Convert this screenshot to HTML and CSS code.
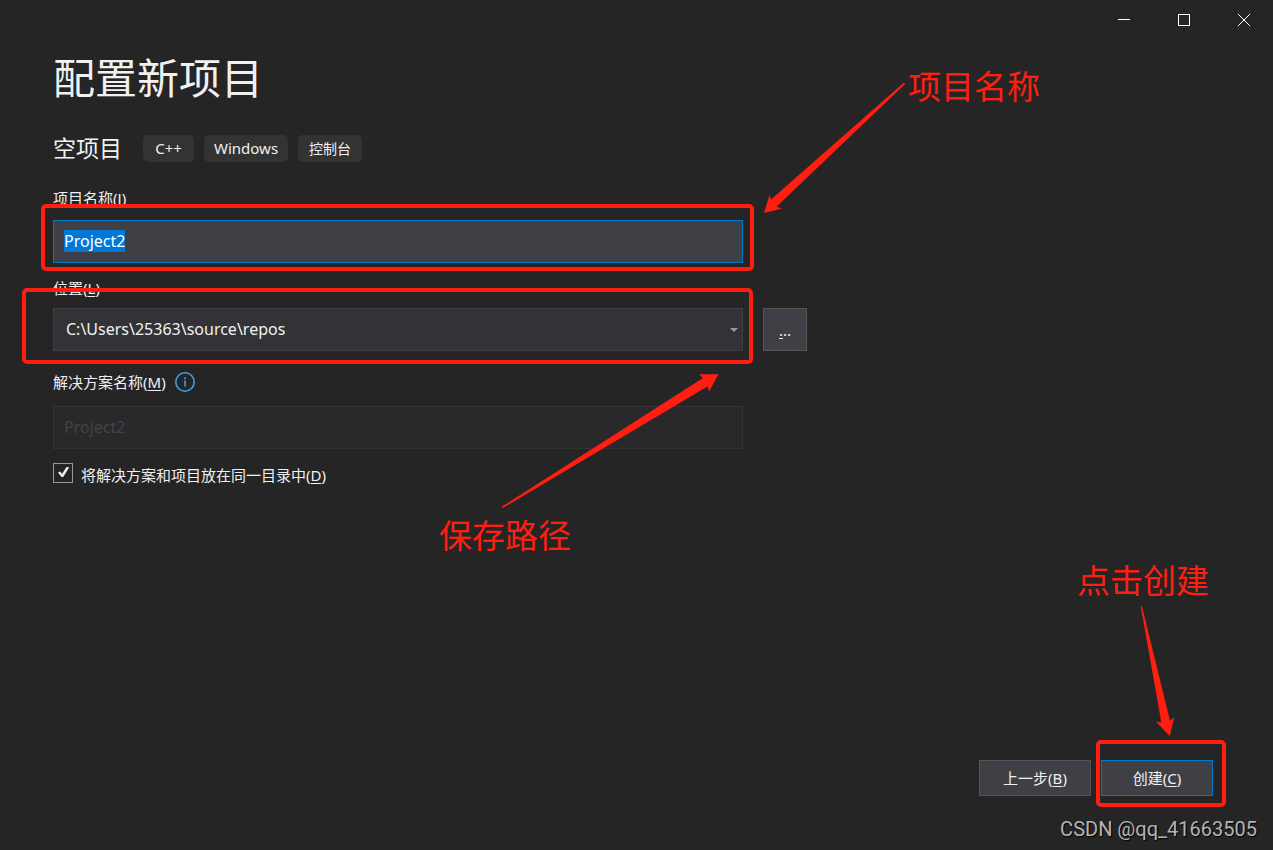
FILE: index.html
```html
<!DOCTYPE html>
<html lang="zh-CN">
<head>
<meta charset="utf-8">
<title>配置新项目</title>
<link rel="stylesheet" href="styles.css">
</head>
<body>
<div class="window">
  <header class="titlebar">
    <button class="winbtn" type="button" aria-label="最小化"><svg width="14" height="14" viewBox="0 0 14 14"><path d="M1 6.500h12"/></svg></button>
    <button class="winbtn" type="button" aria-label="最大化"><svg width="14" height="14" viewBox="0 0 14 14"><path d="M1.500 1.500h11v11h-11z"/></svg></button>
    <button class="winbtn" type="button" aria-label="关闭"><svg width="14" height="14" viewBox="0 0 14 14"><path d="M1 1l12 12M13 1L1 13"/></svg></button>
  </header>
  <main class="content">
    <h1 class="title">配置新项目</h1>
    <div class="template">
      <h2 class="template-name">空项目</h2>
      <ul class="tags"><li class="tag">C++</li><li class="tag">Windows</li><li class="tag tag-cjk">控制台</li></ul>
    </div>
    <form class="form" id="config">
      <div class="group">
        <label class="label" for="name">项目名称(<u>J</u>)</label>
        <div class="field"><input class="box box-active" id="name" type="text" value="Project2" spellcheck="false" autocomplete="off"><span class="frame frame-name"></span></div>
      </div>
      <div class="group group-location">
        <label class="label" for="location">位置(<u>L</u>)</label>
        <div class="field">
          <select class="box box-select" id="location"><option>C:\Users\25363\source\repos</option></select>
          <svg class="caret" width="8" height="4" viewBox="0 0 8 4"><path d="M0 0h8L4 4z"/></svg>
          <span class="frame frame-location"></span>
        </div>
        <button class="browse" type="button" aria-label="浏览"><u>.</u>..</button>
      </div>
      <div class="group group-solution">
        <div class="label-row">
          <label class="label" for="solution">解决方案名称(<u>M</u>)</label>
          <svg class="info" width="20" height="20" viewBox="0 0 20 20"><circle cx="10" cy="10" r="9.200"/><path d="M10 8.500v6M10 5.300v2"/></svg>
        </div>
        <div class="field"><input class="box" id="solution" type="text" value="Project2" disabled></div>
      </div>
      <div class="check-row">
        <input class="check" id="same-dir" type="checkbox" checked>
        <svg class="tick" width="20" height="20" viewBox="0 0 20 20"><path d="M5 9.500l2.300-1 1.700 2.500L13.500 4l2.700.2L10.200 14H8.500z"/></svg>
        <label class="check-label" for="same-dir">将解决方案和项目放在同一目录中(<u>D</u>)</label>
      </div>
    </form>
  </main>
  <footer class="footer">
    <button class="btn" type="button">上一步(<u>B</u>)</button>
    <div class="create"><button class="btn btn-primary" type="submit" form="config">创建(<u>C</u>)</button><span class="frame frame-create"></span></div>
  </footer>
  <svg class="arrow arrow-name" width="144" height="134" viewBox="762 81 144 134"><path d="M764 213l5.500-18 1.500 4.500L904 82.500l1.200 1.500L776.700 206.500l5.300 2z"/></svg>
  <svg class="arrow arrow-path" width="220" height="136" viewBox="500 373 220 136"><path d="M718.500 374.300H699l4 3.700L502 506.500l.8 1.500 205-121.700 1.200 5.400z"/></svg>
  <svg class="arrow arrow-create" width="36" height="134" viewBox="1140 604 36 134"><path d="M1169.700 736L1156 721.700l5.300.6L1140.700 606h1.200L1170 720.700l4.300-3.400z"/></svg>
  <p class="note note-name">项目名称</p>
  <p class="note note-path">保存路径</p>
  <p class="note note-create">点击创建</p>
  <p class="watermark">CSDN @qq_41663505</p>
</div>
<script src="app.js"></script>
</body>
</html>
```
FILE: styles.css
```css
* { box-sizing: border-box; }
body {
  margin: 0;
  background: #252526;
  color: #f1f1f1;
  font: 15px/20px "Noto Sans", "Noto Sans CJK SC", sans-serif;
}
h1, h2, p, ul { margin: 0; padding: 0; font-weight: 400; }
button, input, select { font: inherit; color: inherit; border-radius: 0; outline: none; }
u { text-underline-offset: 2px; }

.window { position: relative; display: flex; flex-direction: column; min-height: 100vh; overflow: hidden; }
.titlebar { display: flex; justify-content: flex-end; height: 40px; margin-right: -1px; }
.winbtn { display: grid; place-items: center; width: 60px; border: 0; padding: 0; background: none; }
.winbtn svg { fill: none; stroke: #fff; }

.content { flex: 1; padding: 8px 53px 0; }
.title { font-size: 42px; line-height: 60px; }
.template { display: flex; align-items: center; gap: 21px; margin-top: 27px; }
.template-name { font-size: 23px; line-height: 27px; }
.tags { display: flex; gap: 10px; list-style: none; }
.tag { min-width: 51px; padding: 0 10px; border-radius: 5px; background: #333334; line-height: 27px; text-align: center; }
.tag-cjk { padding: 0 11px; font-size: 14px; }

.form { margin-top: 26px; }
.group { display: grid; grid-template-columns: minmax(0, 690px) 44px; column-gap: 20px; row-gap: 12px; }
.group .label, .label-row { grid-column: 1 / -1; }
.label, .check-label { justify-self: start; }
.label-row { display: flex; align-items: center; gap: 9px; }
.group-location { margin-top: 15px; row-gap: 10px; }
.group-solution { margin-top: 21px; row-gap: 14px; }
.field { position: relative; }
.box {
  display: block; width: 100%; height: 43px; padding: 0 10px 2px;
  border: 1px solid #3f3f46; background: #333337; font-size: 16px;
}
.box-active { border-color: #007acc; background: #3f3f46; }
.box-active::selection { background: #0078d7; color: #fff; }
.box-select { appearance: none; padding: 0 12px 2px; }
.box:disabled { border-color: #333337; background: #29292b; color: #434346; }
.caret { position: absolute; right: 5px; top: 20px; fill: #999; pointer-events: none; }
.browse { padding: 0; border: 1px solid #555; background: #3f3f46; }
.info { fill: none; stroke: #3e9fe8; stroke-width: 1.6; }

.check-row { position: relative; display: flex; gap: 8px; margin-top: 14px; }
.check { appearance: none; width: 20px; height: 20px; margin: 0; border: 1px solid #999; background: #252526; }
.tick { position: absolute; left: 0; top: 0; fill: #f1f1f1; pointer-events: none; }
.check-label { padding-top: 2px; }

.footer { display: flex; justify-content: flex-end; gap: 10px; padding: 0 60px 54px; }
.btn { width: 112px; height: 36px; padding: 0; border: 1px solid #555; background: #3f3f46; }
.btn-primary { display: block; border-color: #007acc; }
.create { position: relative; }

.frame { position: absolute; border: 4px solid #ff1e10; border-radius: 5px; pointer-events: none; }
.frame-name { inset: -16px -11px -8px -12px; }
.frame-location { inset: -20px -10px -13px -31px; }
.frame-create { inset: -20px -13px -11px -5px; }
.arrow { position: absolute; fill: #ff1e10; pointer-events: none; }
.arrow-name { left: 762px; top: 81px; }
.arrow-path { left: 500px; top: 373px; }
.arrow-create { right: 97px; bottom: 112px; }
.note { position: absolute; color: #ff1e10; font-size: 33px; line-height: 40px; white-space: nowrap; }
.note-name { left: 908px; top: 67px; }
.note-path { left: 439px; top: 516px; }
.note-create { right: 64px; bottom: 249px; }
.watermark {
  position: absolute; right: 16px; bottom: 9px;
  color: #b4b4b4; font: 20px/24px Roboto, "Liberation Sans", sans-serif; text-shadow: 1px 1px 1px #000;
}
```
FILE: app.js
```js
const nameBox = document.getElementById('name');
nameBox.focus();
nameBox.select();
```
